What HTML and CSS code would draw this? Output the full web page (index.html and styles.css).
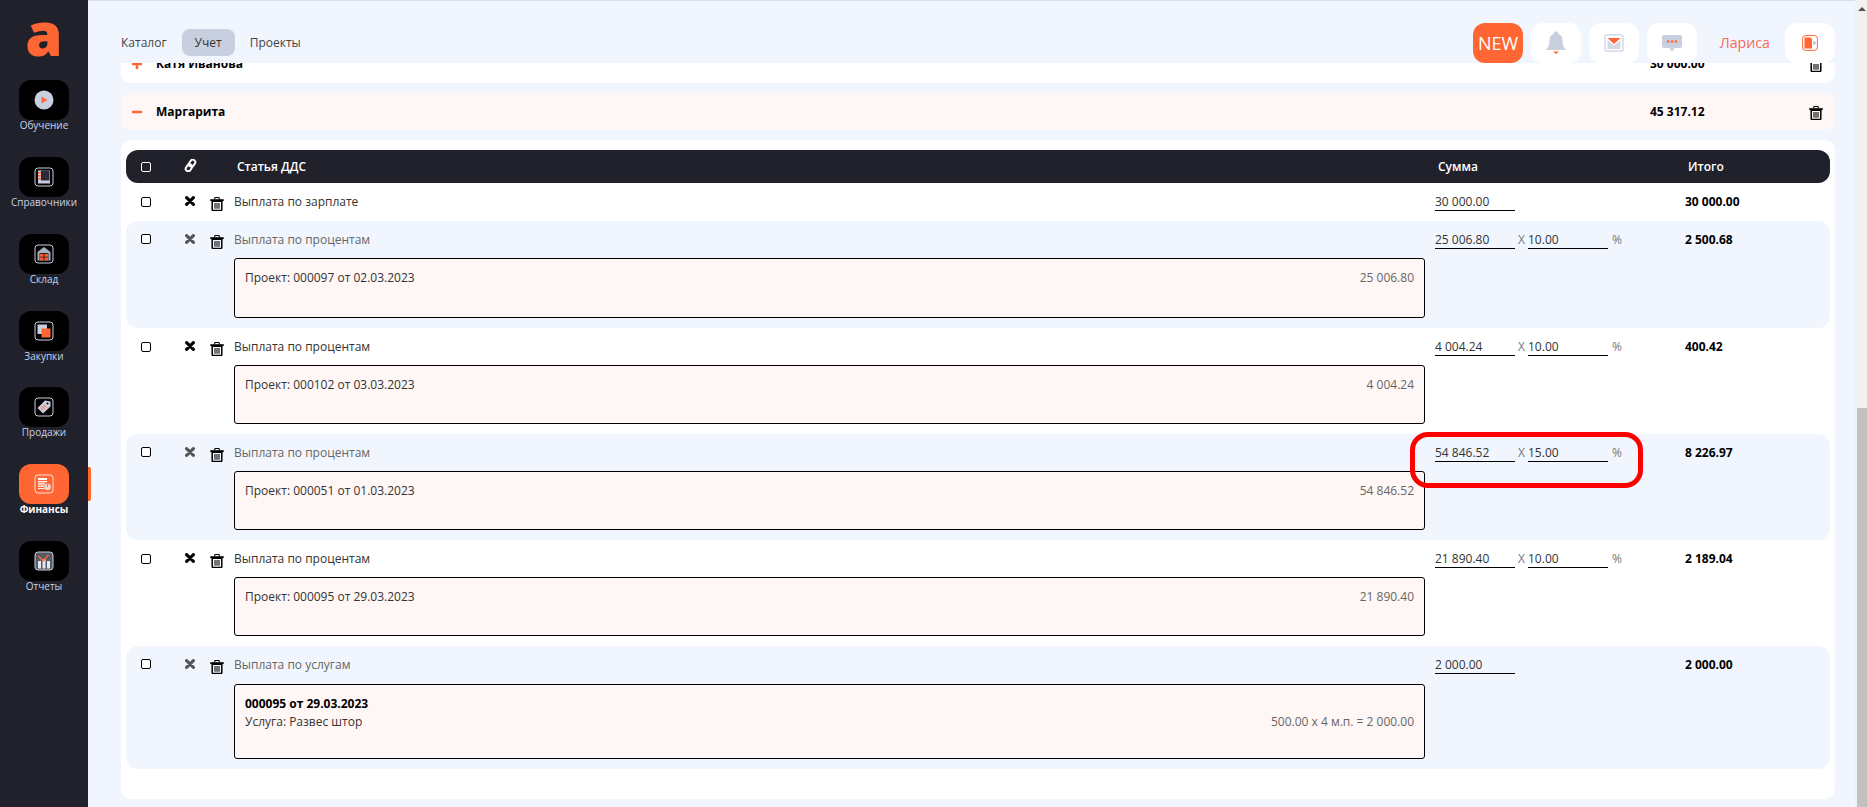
FILE: index.html
```html
<!DOCTYPE html>
<html lang="ru">
<head>
  <meta charset="UTF-8" />
  <title>Учет</title>
  <link rel="stylesheet" href="styles.css">
</head>
<body>
  <svg class="icon-defs" xmlns="http://www.w3.org/2000/svg">
    <symbol id="i-trash" viewBox="0 0 14 14">
      <path d="M4.700 2.200V1.300Q4.700.5 5.500.5h3q.8 0 .8.8v.9" fill="none" stroke="#000" stroke-width="1.100"/>
      <path d="M.3 2.200h13.400v1.900H.3z" fill="#000"/>
      <path d="M2.200 4.200h9.600v8.300a1 1 0 0 1-1 1H3.200a1 1 0 0 1-1-1z" fill="none" stroke="#000" stroke-width="1.500"/>
      <path d="M5 6v5.800M7 6v5.800M9 6v5.800" stroke="#000" stroke-width="1.100"/>
    </symbol>
    <symbol id="i-x" viewBox="0 0 10 10">
      <path d="M1.600 1.600l6.800 6.800M8.400 1.600L1.600 8.400" stroke="currentColor" stroke-width="3.100" stroke-linecap="round"/>
    </symbol>
  </svg>

  <!-- Левое меню -->
  <aside class="sidebar">
    <div class="logo">a</div>
    <a class="nav-item">
      <span class="nav-tile">
        <svg width="20" height="20" viewBox="0 0 20 20"><circle cx="10" cy="10" r="9.500" fill="#c8cfdf"/><path d="M7.500 6.500l6 3.500-6 3.500z" fill="#ff6633"/></svg>
      </span>
      <span class="nav-label">Обучение</span>
    </a>
    <a class="nav-item">
      <span class="nav-tile">
        <svg width="20" height="20" viewBox="0 0 20 20"><rect x="1" y="1" width="18" height="18" rx="3" fill="none" stroke="#c8cfdf"/><rect x="4" y="3.500" width="12" height="13" fill="#c8cfdf"/><path d="M7 3.500h8.500v10H7z" fill="#2a2b35"/><path d="M4 5h3v1.500H4zM4 8h3v1.500H4zM4 11h3v1.500H4z" fill="#ff6633"/></svg>
      </span>
      <span class="nav-label">Справочники</span>
    </a>
    <a class="nav-item">
      <span class="nav-tile">
        <svg width="20" height="20" viewBox="0 0 20 20"><rect x="1" y="1" width="18" height="18" rx="3" fill="none" stroke="#c8cfdf"/><path d="M3.500 8L10 3l6.500 5v8.500h-13z" fill="#a9b0c0"/><path d="M5.500 9h9v7.500h-9z" fill="#20212b"/><path d="M6 10h3.500v2.800H6zM10.500 10H14v2.800h-3.500zM6 13.600h3.500v2.900H6zM10.500 13.600H14v2.900h-3.500z" fill="#ff5a2a"/></svg>
      </span>
      <span class="nav-label">Склад</span>
    </a>
    <a class="nav-item">
      <span class="nav-tile">
        <svg width="20" height="20" viewBox="0 0 20 20"><rect x="1" y="1" width="18" height="18" rx="3" fill="none" stroke="#c8cfdf"/><path d="M3.500 3.500H13V13H3.500z" fill="#c8cfdf"/><path d="M7.500 7.500H16.500V16.500H7.500z" fill="#ff6633"/></svg>
      </span>
      <span class="nav-label">Закупки</span>
    </a>
    <a class="nav-item">
      <span class="nav-tile">
        <svg width="20" height="20" viewBox="0 0 20 20"><rect x="1" y="1" width="18" height="18" rx="3" fill="none" stroke="#c8cfdf"/><path d="M11 3.500l5.500 1v5L9 16.500 3.500 11z" fill="#c8cfdf"/><circle cx="13.500" cy="6.500" r="1" fill="#000"/><path d="M6.500 10.500l3 3M8 9l3 3M9.500 7.500l3 3" stroke="#ff6633" stroke-width="1"/></svg>
      </span>
      <span class="nav-label">Продажи</span>
    </a>
    <a class="nav-item active">
      <span class="nav-tile">
        <svg width="20" height="20" viewBox="0 0 20 20"><rect x="1" y="1" width="18" height="18" rx="3" fill="none" stroke="#fff" opacity=".8"/><path d="M4 4h9v2H4zM4 7h9v1.200H4zM4 9.300h7v1.200H4zM4 11.600h6v1.200H4zM4 14h6v1H4z" fill="#fff"/><circle cx="13.500" cy="13" r="3.300" fill="#fff" opacity=".75"/><path d="M13.500 9.700v3.300" stroke="#ff6633" stroke-width=".8"/></svg>
      </span>
      <span class="nav-label">Финансы</span>
    </a>
    <a class="nav-item">
      <span class="nav-tile">
        <svg width="20" height="20" viewBox="0 0 20 20"><rect x="1" y="1" width="18" height="18" rx="3" fill="#555a66" stroke="#c8cfdf"/><path d="M4 10h3v7.500H4zM8.500 8h3v9.500h-3zM13 10h3v7.500h-3z" fill="#e3e7ef"/><path d="M4.500 5l4.500 5 5.500-6" fill="none" stroke="#ff6633" stroke-width="1.500"/></svg>
      </span>
      <span class="nav-label">Отчеты</span>
    </a>
  </aside>

  <div class="main">
    <header class="topbar">
      <nav class="tabs">
        <a class="tab">Каталог</a>
        <a class="tab current">Учет</a>
        <a class="tab">Проекты</a>
      </nav>
      <div class="top-actions">
        <button class="top-btn new-btn">NEW</button>
        <button class="top-btn">
          <svg width="22" height="26" viewBox="0 0 22 26"><path d="M8.500 4a2.500 2.500 0 0 1 5 0c3 1.200 4 3.500 4 6.500 0 4 1 6.500 3.500 9.500H1c2.500-3 3.500-5.500 3.500-9.500C4.500 7.500 5.500 5.200 8.500 4z" fill="#c8cfdf"/><path d="M8 21.500h6L11 24z" fill="#ff6633"/></svg>
        </button>
        <button class="top-btn">
          <svg width="20" height="18" viewBox="0 0 20 18"><rect x="1" y=".8" width="18" height="16.400" rx="2" fill="#fff" stroke="#c8cfdf" stroke-width="1.200"/><path d="M3.500 6L10 11.500 16.500 6v9h-13z" fill="#d5dae6"/><path d="M3.500 4h13L10 10z" fill="#ff6633"/></svg>
        </button>
        <button class="top-btn">
          <svg width="22" height="19" viewBox="0 0 22 19"><path d="M3 1h16a2 2 0 0 1 2 2v9a2 2 0 0 1-2 2h-5.500L11 18l-2.500-4H3a2 2 0 0 1-2-2V3a2 2 0 0 1 2-2z" fill="#c8cfdf"/><circle cx="7" cy="7.500" r="1.300" fill="#ff6633"/><circle cx="11" cy="7.500" r="1.300" fill="#ff6633"/><circle cx="15" cy="7.500" r="1.300" fill="#ff6633"/></svg>
        </button>
        <span class="user-name">Лариса</span>
        <button class="top-btn">
          <svg width="16" height="16" viewBox="0 0 16 16"><rect x=".6" y=".6" width="14.800" height="14.800" rx="3" fill="#fff" stroke="#ff6633"/><path d="M2.500 2.500h6l1.500 1.500V13.500H2.500z" fill="#ff6633"/><path d="M11.300 5.500L14.500 8l-3.200 2.500z" fill="#b8c0d2"/></svg>
        </button>
      </div>
    </header>

    <div class="content">
      <section class="group group-cut">
        <span class="group-sign">
          <svg width="10" height="10" viewBox="0 0 10 10"><path d="M0 5h10M5 0v10" stroke="#ff6633" stroke-width="2.500"/></svg>
        </span>
        <span class="group-name">Катя Иванова</span>
        <span class="group-sum">30 000.00</span>
        <svg class="trash group-trash"><use href="#i-trash"/></svg>
      </section>

      <section class="group open">
        <span class="group-sign">
          <svg width="10" height="10" viewBox="0 0 10 10"><path d="M0 5h10" stroke="#ff6633" stroke-width="2.500"/></svg>
        </span>
        <span class="group-name">Маргарита</span>
        <span class="group-sum">45 317.12</span>
        <svg class="trash group-trash"><use href="#i-trash"/></svg>
      </section>

      <section class="sheet">
        <div class="thead">
          <div class="tools">
            <span class="check"></span>
            <svg class="link-icon" width="13" height="13" viewBox="0 0 14 14"><g fill="none" stroke="#fff" stroke-width="2.100" transform="rotate(-55 7 7)"><rect x="0" y="4.300" width="8" height="5.400" rx="2.700"/><rect x="6" y="4.300" width="8" height="5.400" rx="2.700"/></g></svg>
          </div>
          <div class="th-name">Статья ДДС</div>
          <div class="th-sum">Сумма</div>
          <div class="th-total">Итого</div>
        </div>

        <div class="row plain">
          <div class="tools">
            <span class="check"></span>
            <svg class="del"><use href="#i-x"/></svg>
            <svg class="trash"><use href="#i-trash"/></svg>
          </div>
          <div class="body"><div class="name">Выплата по зарплате</div></div>
          <div class="sum"><input class="amount" value="30 000.00"></div>
          <div class="total">30 000.00</div>
        </div>

        <div class="row shaded">
          <div class="tools">
            <span class="check"></span>
            <svg class="del"><use href="#i-x"/></svg>
            <svg class="trash"><use href="#i-trash"/></svg>
          </div>
          <div class="body">
            <div class="name">Выплата по процентам</div>
            <div class="doc"><span>Проект: 000097 от 02.03.2023</span><span class="doc-sum">25 006.80</span></div>
          </div>
          <div class="sum"><input class="amount" value="25 006.80"><span class="mul">X</span><input class="amount" value="10.00"><span class="pct">%</span></div>
          <div class="total">2 500.68</div>
        </div>

        <div class="row plain">
          <div class="tools">
            <span class="check"></span>
            <svg class="del"><use href="#i-x"/></svg>
            <svg class="trash"><use href="#i-trash"/></svg>
          </div>
          <div class="body">
            <div class="name">Выплата по процентам</div>
            <div class="doc"><span>Проект: 000102 от 03.03.2023</span><span class="doc-sum">4 004.24</span></div>
          </div>
          <div class="sum"><input class="amount" value="4 004.24"><span class="mul">X</span><input class="amount" value="10.00"><span class="pct">%</span></div>
          <div class="total">400.42</div>
        </div>

        <div class="row shaded">
          <div class="tools">
            <span class="check"></span>
            <svg class="del"><use href="#i-x"/></svg>
            <svg class="trash"><use href="#i-trash"/></svg>
          </div>
          <div class="body">
            <div class="name">Выплата по процентам</div>
            <div class="doc"><span>Проект: 000051 от 01.03.2023</span><span class="doc-sum">54 846.52</span></div>
          </div>
          <div class="sum"><input class="amount" value="54 846.52"><span class="mul">X</span><input class="amount" value="15.00"><span class="pct">%</span></div>
          <div class="total">8 226.97</div>
          <div class="red-mark"></div>
        </div>

        <div class="row plain">
          <div class="tools">
            <span class="check"></span>
            <svg class="del"><use href="#i-x"/></svg>
            <svg class="trash"><use href="#i-trash"/></svg>
          </div>
          <div class="body">
            <div class="name">Выплата по процентам</div>
            <div class="doc"><span>Проект: 000095 от 29.03.2023</span><span class="doc-sum">21 890.40</span></div>
          </div>
          <div class="sum"><input class="amount" value="21 890.40"><span class="mul">X</span><input class="amount" value="10.00"><span class="pct">%</span></div>
          <div class="total">2 189.04</div>
        </div>

        <div class="row shaded service">
          <div class="tools">
            <span class="check"></span>
            <svg class="del"><use href="#i-x"/></svg>
            <svg class="trash"><use href="#i-trash"/></svg>
          </div>
          <div class="body">
            <div class="name">Выплата по услугам</div>
            <div class="doc">
              <div><b>000095 от 29.03.2023</b><br>Услуга: Развес штор</div>
              <span class="doc-sum">500.00 x 4 м.п. = 2 000.00</span>
            </div>
          </div>
          <div class="sum"><input class="amount" value="2 000.00"></div>
          <div class="total">2 000.00</div>
        </div>
      </section>
    </div>
  </div>

  <div class="scrollbar">
    <span class="scroll-arrow"></span>
    <span class="scroll-thumb"></span>
  </div>
</body>
</html>
```

FILE: styles.css
```css
* {
  box-sizing: border-box;
}
html, body {
  height: 100%;
}
body {
  margin: 0;
  display: flex;
  overflow: hidden;
  font-family: "Open Sans", Arial, sans-serif;
  font-size: 12px;
  line-height: 18px;
  color: #333;
  background-color: #f1f6fe;
}
.icon-defs {
  position: absolute;
  width: 0;
  height: 0;
}

/* Sidebar */
.sidebar {
  position: relative;
  flex: none;
  width: 88px;
  background-color: #20212b;
}
.logo {
  height: 66px;
  margin-bottom: 14px;
  text-align: center;
  font-size: 60px;
  font-weight: 800;
  line-height: 66px;
  color: #ff6633;
}
.nav-item {
  position: relative;
  display: flex;
  flex-direction: column;
  align-items: center;
  height: 76.850px;
  color: #c5d2ea;
  font-size: 10px;
}
.nav-tile {
  display: flex;
  align-items: center;
  justify-content: center;
  width: 50px;
  height: 40px;
  border-radius: 12px;
  background-color: #000;
}
.nav-label {
  line-height: 16px;
  margin-top: -3px;
}
.nav-item.active {
  color: #fff;
  font-weight: 700;
}
.nav-item.active .nav-tile {
  background-color: #ff6633;
}
.nav-item.active::after {
  content: "";
  position: absolute;
  left: 88px;
  top: 3px;
  width: 3px;
  height: 34px;
  background-color: #ff6633;
  border-radius: 0 2px 2px 0;
}

/* Top bar */
.main {
  flex: 1;
  min-width: 0;
  display: flex;
  flex-direction: column;
  border-top: 1px solid #d8dde6;
}
.topbar {
  flex: none;
  height: 62px;
  display: flex;
  justify-content: space-between;
  padding: 22px 20px 0 20px;
}
.tabs {
  display: flex;
  align-items: flex-start;
  gap: 2px;
  margin-top: 6px;
}
.tab {
  height: 27px;
  padding: 0 13px;
  border-radius: 8px;
  font-size: 12px;
  line-height: 27px;
  color: #444;
}
.tab.current {
  background-color: #c8cfdf;
  color: #333;
}
.top-actions {
  display: flex;
  gap: 8px;
}
.top-btn {
  display: flex;
  align-items: center;
  justify-content: center;
  width: 50px;
  height: 40px;
  padding: 0;
  border: none;
  border-radius: 12px;
  background-color: #fff;
}
.new-btn {
  background-color: #ff6633;
  color: #fff;
  font-family: inherit;
  font-size: 18px;
}
.user-name {
  width: 72px;
  padding-right: 7px;
  text-align: right;
  font-size: 14.200px;
  line-height: 40px;
  color: #f96a55;
}

/* Groups */
.content {
  flex: 1;
  min-height: 0;
  overflow: hidden;
  padding: 0 20px 0 33px;
}
.group {
  display: flex;
  align-items: center;
  height: 37px;
  margin-bottom: 10px;
  padding: 0 12px 0 11px;
  border-radius: 10px;
  background-color: #fff;
  color: #000;
  font-size: 12px;
  font-weight: 700;
}
.group-cut {
  margin-top: -17px;
  padding-bottom: 2px;
}
.group.open {
  background-color: #fff7f5;
}
.group-sign {
  display: flex;
  width: 24px;
}
.group-name {
  flex: none;
  width: 1494px;
}
.group-sum {
  flex: none;
  width: 159px;
}
.group-trash {
  margin-top: 2px;
}
.trash {
  flex: none;
  width: 14px;
  height: 14px;
}

/* Table */
.sheet {
  padding: 10px 5px 30px;
  border-radius: 10px;
  background-color: #fff;
}
.thead, .row {
  display: grid;
  grid-template-columns: 108px 1201px 250px 145px;
}
.thead {
  align-items: center;
  height: 33px;
  border-radius: 12px;
  background-color: #20212b;
  color: #fff;
  font-weight: 600;
}
.thead .check {
  margin-top: 0;
  border-color: #fff;
  background: transparent;
}
.th-name, .th-sum, .th-total {
  padding-left: 3px;
}
.row {
  position: relative;
  padding-bottom: 10px;
  border-radius: 12px;
}
.row.shaded {
  background-color: #f1f6fe;
}
.row.plain:nth-child(2) {
  height: 38.400px;
}
.tools {
  display: flex;
  align-items: flex-start;
  padding-left: 15px;
}
.thead .tools {
  align-items: center;
}
.check {
  flex: none;
  width: 10px;
  height: 10px;
  margin-top: 14px;
  border: 1px solid #000;
  border-radius: 2px;
  background-color: #fff;
}
.shaded .check {
  margin-top: 13px;
}
.link-icon {
  margin: -3px 0 0 33px;
}
.del {
  flex: none;
  width: 10px;
  height: 10px;
  margin: 13px 0 0 34px;
  color: #000;
}
.tools .trash {
  margin: 14px 0 0 15px;
}
.shaded .del {
  color: #555;
}
.name {
  padding-top: 10px;
  height: 28px;
}
.shaded .name {
  color: #666;
}
.doc {
  display: flex;
  justify-content: space-between;
  align-items: flex-start;
  width: 1191px;
  height: 59.250px;
  margin-top: 9px;
  padding: 10px 10px 0 10px;
  border: 1px solid #000;
  border-radius: 3px;
  background-color: #fff7f5;
}
.row:nth-child(3) .doc {
  height: 60px;
}
.row:nth-child(4) .doc {
  height: 58.500px;
}
.doc b {
  color: #000;
}
.doc-sum {
  color: #666;
}
.service .doc {
  height: 75px;
  margin-top: 10px;
}
.service .doc-sum {
  margin-top: 18px;
}
.sum {
  display: flex;
  align-items: flex-start;
  padding-top: 10px;
}
.amount {
  flex: none;
  width: 80px;
  height: 18px;
  padding: 0;
  border: none;
  border-bottom: 1px solid #000;
  border-radius: 0;
  background: transparent;
  font-family: inherit;
  font-size: 12px;
  line-height: 17px;
  color: #333;
  outline: none;
}
.mul {
  width: 13px;
  padding-left: 3px;
  color: #777;
}
.pct {
  padding-left: 4px;
  color: #777;
}
.total {
  padding-top: 10px;
  color: #000;
  font-weight: 700;
}
.red-mark {
  position: absolute;
  left: 1284px;
  top: -2px;
  width: 233px;
  height: 56px;
  border: 5px solid #f00;
  border-radius: 18px;
}

/* Scrollbar */
.scrollbar {
  position: relative;
  flex: none;
  width: 12px;
  background-color: #f1f1f1;
}
.scroll-arrow {
  position: absolute;
  left: 3px;
  top: 7px;
  border-left: 4px solid transparent;
  border-right: 4px solid transparent;
  border-bottom: 4px solid #505050;
}
.scroll-thumb {
  position: absolute;
  left: 2px;
  top: 408px;
  bottom: 0;
  width: 10px;
  background-color: #c1c1c1;
}
```
